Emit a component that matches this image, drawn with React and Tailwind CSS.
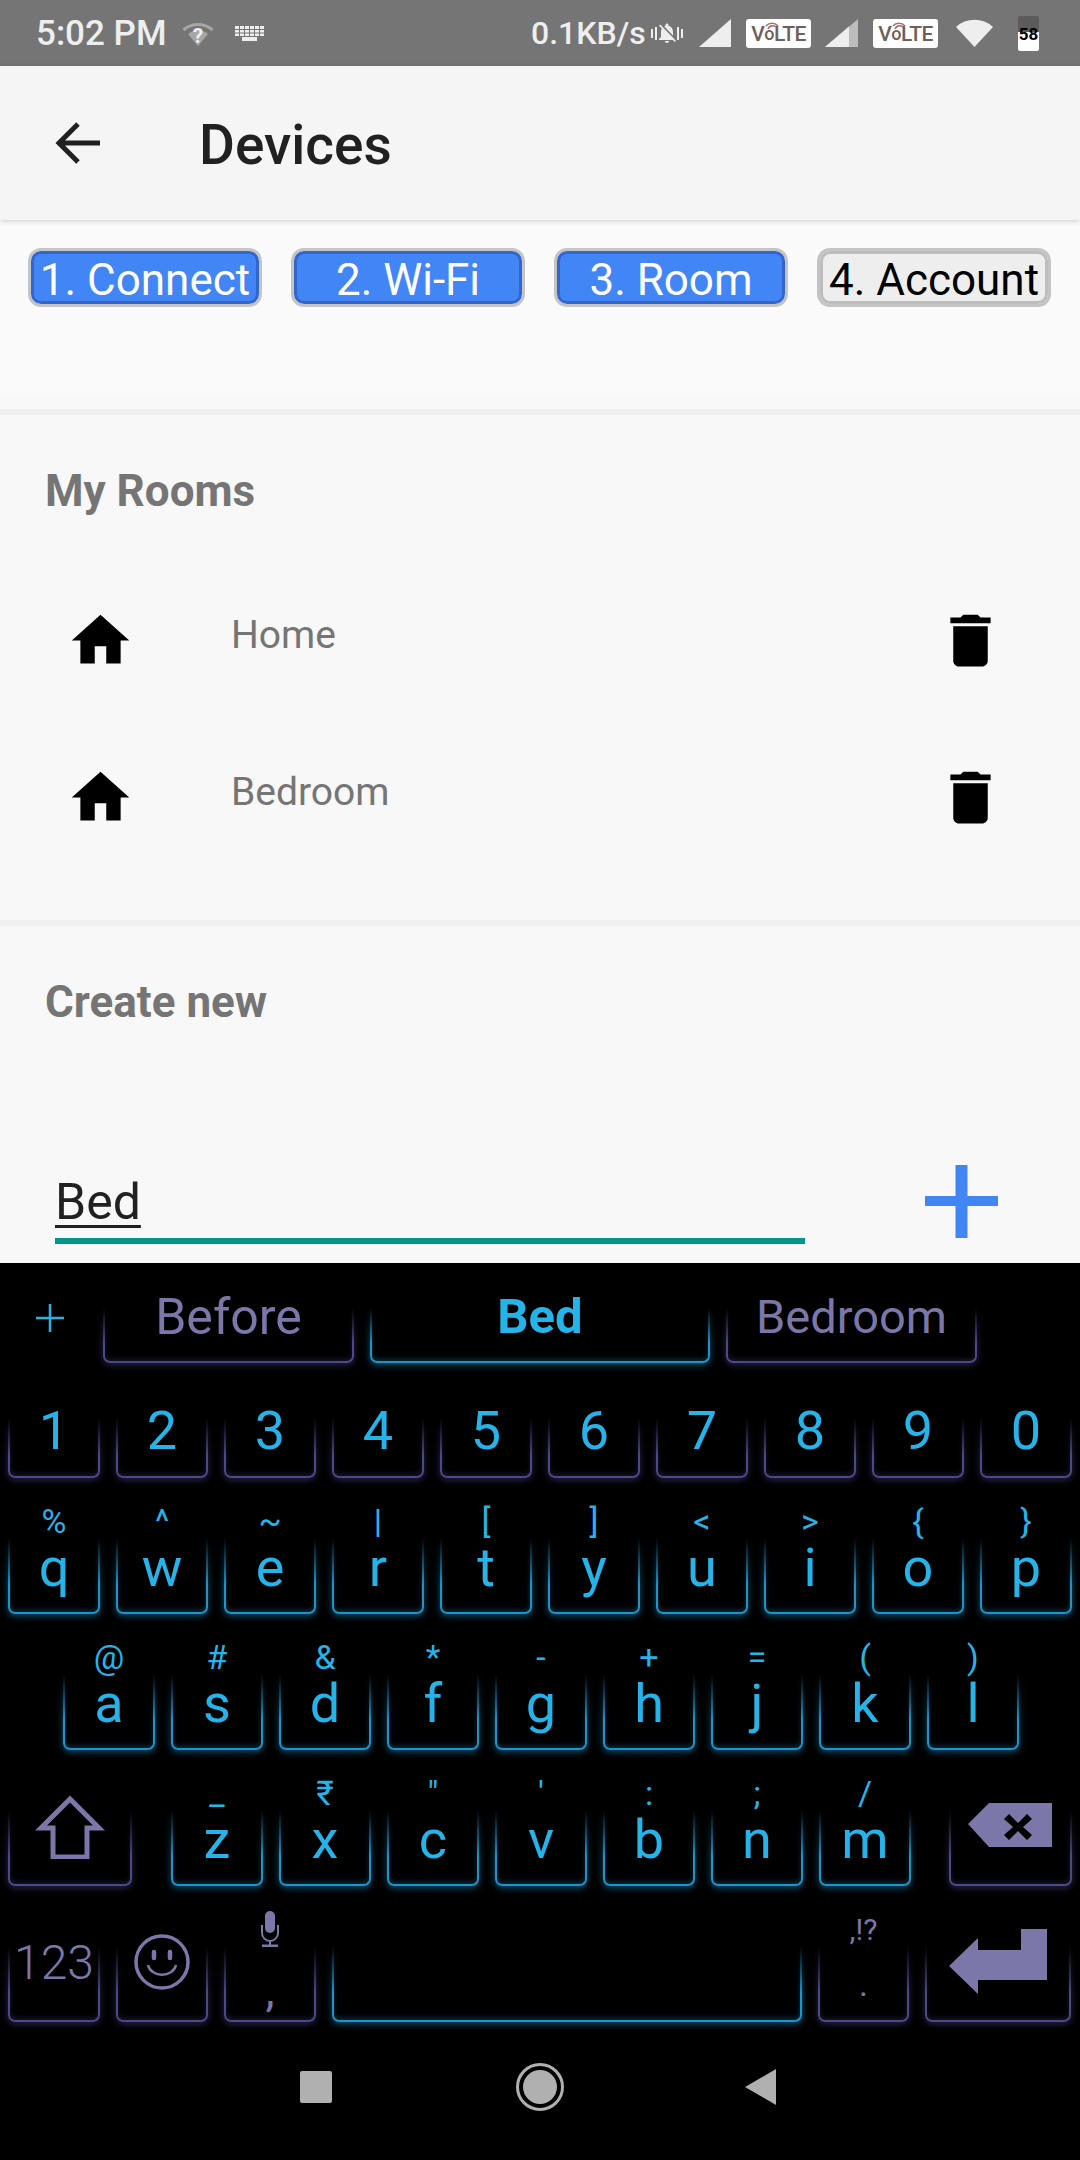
import React from "react";

const PURPLE = "#7b77a8";

function KeyEdge({ blue, tall = 76 }) {
    // bottom edge with a glow, sides fade out going up
    return (
        <div
            className={`absolute -inset-x-2 -bottom-2 px-2 pb-2 [mask-image:linear-gradient(to_top,#000_45%,transparent)] ${
                tall === 76 ? "h-[84px]" : tall === 60 ? "h-[68px]" : "h-[63px]"
            }`}
        >
            <div
                className={`h-full rounded-b-[7px] border-2 border-t-0 ${
                    blue
                        ? "border-[#1e94cb] shadow-[0_2px_7px_rgba(30,148,203,0.55),inset_0_-2px_5px_rgba(30,148,203,0.3)]"
                        : "border-[#4c4889] shadow-[0_2px_7px_rgba(76,72,137,0.5),inset_0_-2px_5px_rgba(76,72,137,0.3)]"
                }`}
            />
        </div>
    );
}

function Key({ top, label, blue = true, tall, w = "w-[92px]" }) {
    return (
        <div className={`relative flex h-[136px] shrink-0 flex-col items-center justify-end pb-4 text-[#25b4ea] ${w}`}>
            <KeyEdge blue={blue} tall={tall} />
            {top && <div className="relative -mb-[3px] h-10 text-[34px] leading-10">{top}</div>}
            <div className="relative h-[60px] text-[54px] leading-[60px]">{label}</div>
        </div>
    );
}

function Suggestion({ text, w, bold, size }) {
    return (
        <div
            className={`relative flex h-[55px] justify-center ${w} ${
                bold ? "font-bold text-[#25b4ea]" : "text-[#7b77a8]"
            }`}
        >
            <KeyEdge blue={bold} tall={55} />
            <div className={`absolute -top-[21px] leading-[60px] ${size}`}>{text}</div>
        </div>
    );
}

function Step({ label, active }) {
    return (
        <div className="h-[59px] w-[234px] rounded-[13px] border-[3px] border-[#c4c4c4]">
            <div
                className={`flex h-full items-center justify-center whitespace-nowrap rounded-[10px] border-[3px] pt-[5px] text-[44px] leading-none ${
                    active
                        ? "border-[#3366cc] bg-[#4285f4] text-white"
                        : "border-[#bdbdbd] bg-[#eeeeee] text-black"
                }`}
            >
                {label}
            </div>
        </div>
    );
}

function Room({ name }) {
    return (
        <div className="flex h-[157px] items-center pl-[66px] pr-[75px]">
            <svg className="h-[69px] w-[69px]" viewBox="0 0 24 24" fill="#000">
                <path d="M10 20v-6h4v6h5v-8h3L12 3 2 12h3v8z" />
            </svg>
            <div className="mb-[10px] ml-[96px] flex-1 text-[39px] text-[#757575]">{name}</div>
            <svg className="h-[69px] w-[69px]" viewBox="0 0 24 24" fill="#000">
                <path d="M6 19c0 1.1.9 2 2 2h8c1.1 0 2-.9 2-2V7H6v12zM19 4h-3.5l-1-1h-5l-1 1H5v2h14V4z" />
            </svg>
        </div>
    );
}

function Volte() {
    return (
        <div className="relative flex h-[29px] w-[65px] items-center justify-center rounded-[3px] bg-white pt-[2px] text-[21px] font-medium leading-none tracking-[-0.5px] text-[#6d5f60]">
            V<span className="text-[18px]">o</span>LTE
            <svg className="absolute left-[19px] top-[2px] h-[13px] w-[15px]" viewBox="0 0 15 13" fill="none" stroke="#a5706f" strokeWidth="1.6">
                <path d="M3 8a5 5 0 0 1 8 -2" />
                <path d="M1 5a8 8 0 0 1 12 0" />
            </svg>
        </div>
    );
}

function StatusBar() {
    return (
        <div className="flex h-[66px] items-center bg-[#757575] pl-9 text-[#eeeeee]">
            <div className="w-[136px] whitespace-nowrap text-[35px] font-medium leading-none">5:02 PM</div>
            <svg className="ml-[10px] h-[25px] w-[32px]" viewBox="0 0 32 25">
                <path d="M1.500 9a22 22 0 0 1 29 0" fill="none" stroke="#a6a6a6" strokeWidth="3" />
                <path d="M6 13a15 15 0 0 1 20 0l-10 12z" fill="#a6a6a6" />
                <text x="16" y="22" textAnchor="middle" fontSize="21" fontWeight="700" fill="#eeeeee">?</text>
            </svg>
            <svg className="ml-[21px] h-[15px] w-[29px]" viewBox="0 0 29 15" fill="#eeeeee">
                <path d="M0 0h29v10H0z" />
                <path d="M7 11h15v4H7z" />
                <path d="M0 3h29v1H0zM0 6.500h29v1H0zM4 0h1v10H4zM9 0h1v10H9zM14 0h1v10h-1zM19 0h1v10h-1zM24 0h1v10h-1z" fill="#757575" />
            </svg>
            <div className="ml-[267px] w-[116px] whitespace-nowrap text-[32px] font-medium leading-none">0.1KB/s</div>
            <svg className="ml-[3px] h-[34px] w-[34px]" viewBox="0 0 34 34" fill="#eeeeee">
                <g transform="translate(5 5) scale(1)">
                    <path d="M20 18.690L7.840 6.140 5.270 3.490 4 4.760l2.800 2.800v.010c-.520.990-.800 2.160-.800 3.420v5l-2 2v1h13.730l2 2L21 19.720l-1-1.030zM12 22c1.110 0 2-.890 2-2h-4c0 1.110.890 2 2 2zm6-7.320V11c0-3.080-1.640-5.640-4.500-6.320V4c0-.830-.670-1.500-1.500-1.500s-1.500.670-1.500 1.500v.680c-.150.030-.290.080-.420.120-.100.030-.200.070-.300.110h-.010c-.200.080-.400.170-.590.270-.030.010-.060.020-.090.040l8.410 8.880z" />
                </g>
                <path d="M1 13h2v9H1zM5 11h2v13H5zM31 13h2v9h-2zM27 11h2v13h-2z" />
            </svg>
            <svg className="ml-[15px] h-[28px] w-[32px]" viewBox="0 0 32 28" fill="#eeeeee">
                <path d="M0 28L32 0v28z" />
            </svg>
            <div className="ml-[15px]"><Volte /></div>
            <svg className="ml-[14px] h-[28px] w-[33px]" viewBox="0 0 33 28">
                <path d="M0 28L33 0v28z" fill="#bdbdbd" />
                <path d="M0 28L24 7.600V28z" fill="#eeeeee" />
            </svg>
            <div className="ml-[15px]"><Volte /></div>
            <svg className="ml-[18px] h-[28px] w-[37px]" viewBox="0 0 37 28" fill="#eeeeee">
                <path d="M0 8a27 27 0 0 1 37 0L18.500 28z" />
            </svg>
            <div className="relative ml-[25px] h-[35px] w-[21px] overflow-hidden rounded-[2px] bg-[#5b5b5b]">
                <div className="absolute inset-x-0 bottom-0 h-[19px] bg-white" />
                <div className="relative mt-[8px] text-center text-[17px] font-bold leading-[20px] text-black">58</div>
            </div>
        </div>
    );
}

export default function App() {
    const digits = "1234567890".split("");
    const qwerty = [["q", "%"], ["w", "^"], ["e", "~"], ["r", "|"], ["t", "["], ["y", "]"], ["u", "<"], ["i", ">"], ["o", "{"], ["p", "}"]];
    const asdf = [["a", "@"], ["s", "#"], ["d", "&"], ["f", "*"], ["g", "-"], ["h", "+"], ["j", "="], ["k", "("], ["l", ")"]];
    const zxcv = [["z", "_"], ["x", "₹"], ["c", '"'], ["v", "'"], ["b", ":"], ["n", ";"], ["m", "/"]];

    return (
        <div className="flex h-[2160px] w-[1080px] flex-col overflow-hidden bg-[#f8f8f8] font-[Roboto,sans-serif]">
            <StatusBar />

            {/* APP BAR */}
            <div className="relative flex h-[154px] items-center bg-[#f5f5f5] shadow-[0_1px_5px_rgba(0,0,0,0.18)]">
                <svg className="ml-[55px] h-[42px] w-[45px]" viewBox="0 0 45 42" fill="none" stroke="#212121" strokeWidth="5">
                    <path d="M45 21H4M23 2L4 21l19 19" />
                </svg>
                <div className="ml-[99px] mt-[5px] text-[55px] font-medium text-[#212121]">Devices</div>
            </div>

            {/* STEPS */}
            <div className="flex h-[177px] items-start gap-[29px] bg-[#fafafa] pl-7 pt-7">
                <Step label="1. Connect" active />
                <Step label="2. Wi-Fi" active />
                <Step label="3. Room" active />
                <Step label="4. Account" />
            </div>
            <div className="h-3 bg-[#f8f8f8]" />
            <div className="h-[6px] bg-[#f0f0f0]" />

            {/* MY ROOMS */}
            <div className="h-[147px] pl-[45px] pt-[53px] text-[44px] font-bold leading-[46px] text-[#757575]">My Rooms</div>
            <Room name="Home" />
            <Room name="Bedroom" />
            <div className="mt-[44px] h-[6px] bg-[#f0f0f0]" />

            {/* CREATE NEW */}
            <div className="h-[216px] pl-[45px] pt-[53px] text-[44px] font-bold leading-[46px] text-[#757575]">Create new</div>
            <div className="flex h-[121px] items-start pl-[55px]">
                <div className="h-[102px] w-[750px] border-b-[6px] border-[#009688] pt-[31px]">
                    <span className="text-[50px] leading-[58px] text-[#212121] underline decoration-[3px] underline-offset-[6px]">Bed</span>
                </div>
                <svg className="ml-[120px] mt-[23px] h-[73px] w-[73px]" viewBox="0 0 73 73" fill="#4285f4">
                    <path d="M30.500 0h12v73h-12z" />
                    <path d="M0 31h73v10H0z" />
                </svg>
            </div>

            {/* KEYBOARD */}
            <div className="flex-1 bg-black">
                <div className="flex h-[100px] items-end">
                    <svg className="mb-[31px] ml-[36px] h-7 w-7" viewBox="0 0 28 28" fill="none" stroke="#25b4ea" strokeWidth="2.500">
                        <path d="M14 0v28M0 14h28" />
                    </svg>
                    <div className="ml-[39px] flex gap-4">
                        <Suggestion text="Before" w="w-[251px]" size="text-[50px]" />
                        <Suggestion text="Bed" w="w-[340px]" size="text-[49px]" bold />
                        <Suggestion text="Bedroom" w="w-[251px]" size="text-[47px]" />
                    </div>
                </div>

                <div className="flex h-[115px] items-end gap-4 pl-2">
                    {digits.map(d => (
                        <div key={d} className="relative flex h-[115px] w-[92px] flex-col items-center justify-end pb-[17px] text-[#25b4ea]">
                            <KeyEdge tall={60} blue={false} />
                            <div className="relative h-[60px] text-[54px] leading-[60px]">{d}</div>
                        </div>
                    ))}
                </div>

                <div className="flex gap-4 pl-2">
                    {qwerty.map(([k, s]) => <Key key={k} label={k} top={s} />)}
                </div>

                <div className="flex gap-4 pl-[63px]">
                    {asdf.map(([k, s]) => <Key key={k} label={k} top={s} />)}
                </div>

                <div className="flex pl-2">
                    <div className="relative h-[136px] w-[124px]">
                        <KeyEdge blue={false} />
                        <svg className="absolute left-[27px] top-[45px] h-[64px] w-[70px]" viewBox="0 0 70 64" fill="none" stroke={PURPLE} strokeWidth="5">
                            <path d="M35 4L6 33h12v29h34V33h12z" />
                        </svg>
                    </div>
                    <div className="ml-[39px] flex gap-4">
                        {zxcv.map(([k, s]) => <Key key={k} label={k} top={s} />)}
                    </div>
                    <div className="relative ml-[38px] h-[136px] w-[123px]">
                        <KeyEdge blue={false} />
                        <svg className="absolute left-[19px] top-[53px] h-[44px] w-[84px]" viewBox="0 0 84 44">
                            <path d="M0 21L21 0h63v44H21z" fill={PURPLE} />
                            <path d="M41 11l9 9 9-9 5 5-9 8 9 8-5 5-9-9-9 9-5-5 9-8-9-8z" fill="#000" />
                        </svg>
                    </div>
                </div>

                <div className="flex gap-4 pl-2">
                    <div className="relative flex h-[136px] w-[92px] justify-center">
                        <KeyEdge blue={false} />
                        <div className="absolute top-[47px] text-[48px] font-light leading-[60px] text-[#7b77a8]">123</div>
                    </div>
                    <div className="relative h-[136px] w-[92px]">
                        <KeyEdge blue={false} />
                        <svg className="absolute left-[18px] top-[48px] h-[56px] w-[56px]" viewBox="0 0 56 56" fill="none" stroke={PURPLE} strokeWidth="3.500">
                            <circle cx="28" cy="28" r="26" />
                            <path d="M14 31c3 13 25 13 28 0" strokeWidth="2.500" />
                            <path d="M20 18v6M36 18v6" strokeWidth="4.500" strokeLinecap="round" />
                        </svg>
                    </div>
                    <div className="relative flex h-[136px] w-[92px] justify-center">
                        <KeyEdge blue={false} />
                        <svg className="absolute top-[25px] h-[36px] w-[18px]" viewBox="0 0 18 36" fill={PURPLE}>
                            <rect x="4" y="0" width="10" height="22" rx="5" />
                            <path d="M1 14v8a8 8 0 0 0 16 0v-8" fill="none" stroke={PURPLE} strokeWidth="2" />
                            <path d="M8 30h2v4H8zM1 33.500h16V36H1z" />
                        </svg>
                        <div className="absolute top-[79px] text-[46px] leading-[50px] text-[#7b77a8]">,</div>
                    </div>
                    <div className="relative h-[136px] w-[470px]">
                        <KeyEdge blue />
                    </div>
                    <div className="relative flex h-[136px] w-[91px] justify-center">
                        <KeyEdge blue={false} />
                        <div className="absolute top-[24px] text-[30px] leading-[40px] text-[#7b77a8]">,!?</div>
                        <div className="absolute top-[78px] text-[34px] leading-[40px] text-[#7b77a8]">.</div>
                    </div>
                    <div className="relative h-[136px] w-[146px]">
                        <KeyEdge blue={false} />
                        <svg className="absolute left-[24px] top-[43px] h-[65px] w-[98px]" viewBox="0 0 98 65" fill={PURPLE}>
                            <path d="M0 37L29 9v12h43V0h26v51H29v14z" />
                        </svg>
                    </div>
                </div>

                {/* NAV BAR */}
                <div className="flex h-[137px] items-center pb-[8px] pl-[300px]">
                    <div className="h-8 w-8 rounded-[2px] bg-[#b0b0b0]" />
                    <div className="ml-[184px] flex h-12 w-12 items-center justify-center rounded-full border-[3px] border-[#b0b0b0]">
                        <div className="h-[34px] w-[34px] rounded-full bg-[#b0b0b0]" />
                    </div>
                    <svg className="ml-[181px] h-9 w-[31px]" viewBox="0 0 31 36" fill="#b0b0b0">
                        <path d="M0 18L31 0v36z" />
                    </svg>
                </div>
            </div>
        </div>
    );
}
